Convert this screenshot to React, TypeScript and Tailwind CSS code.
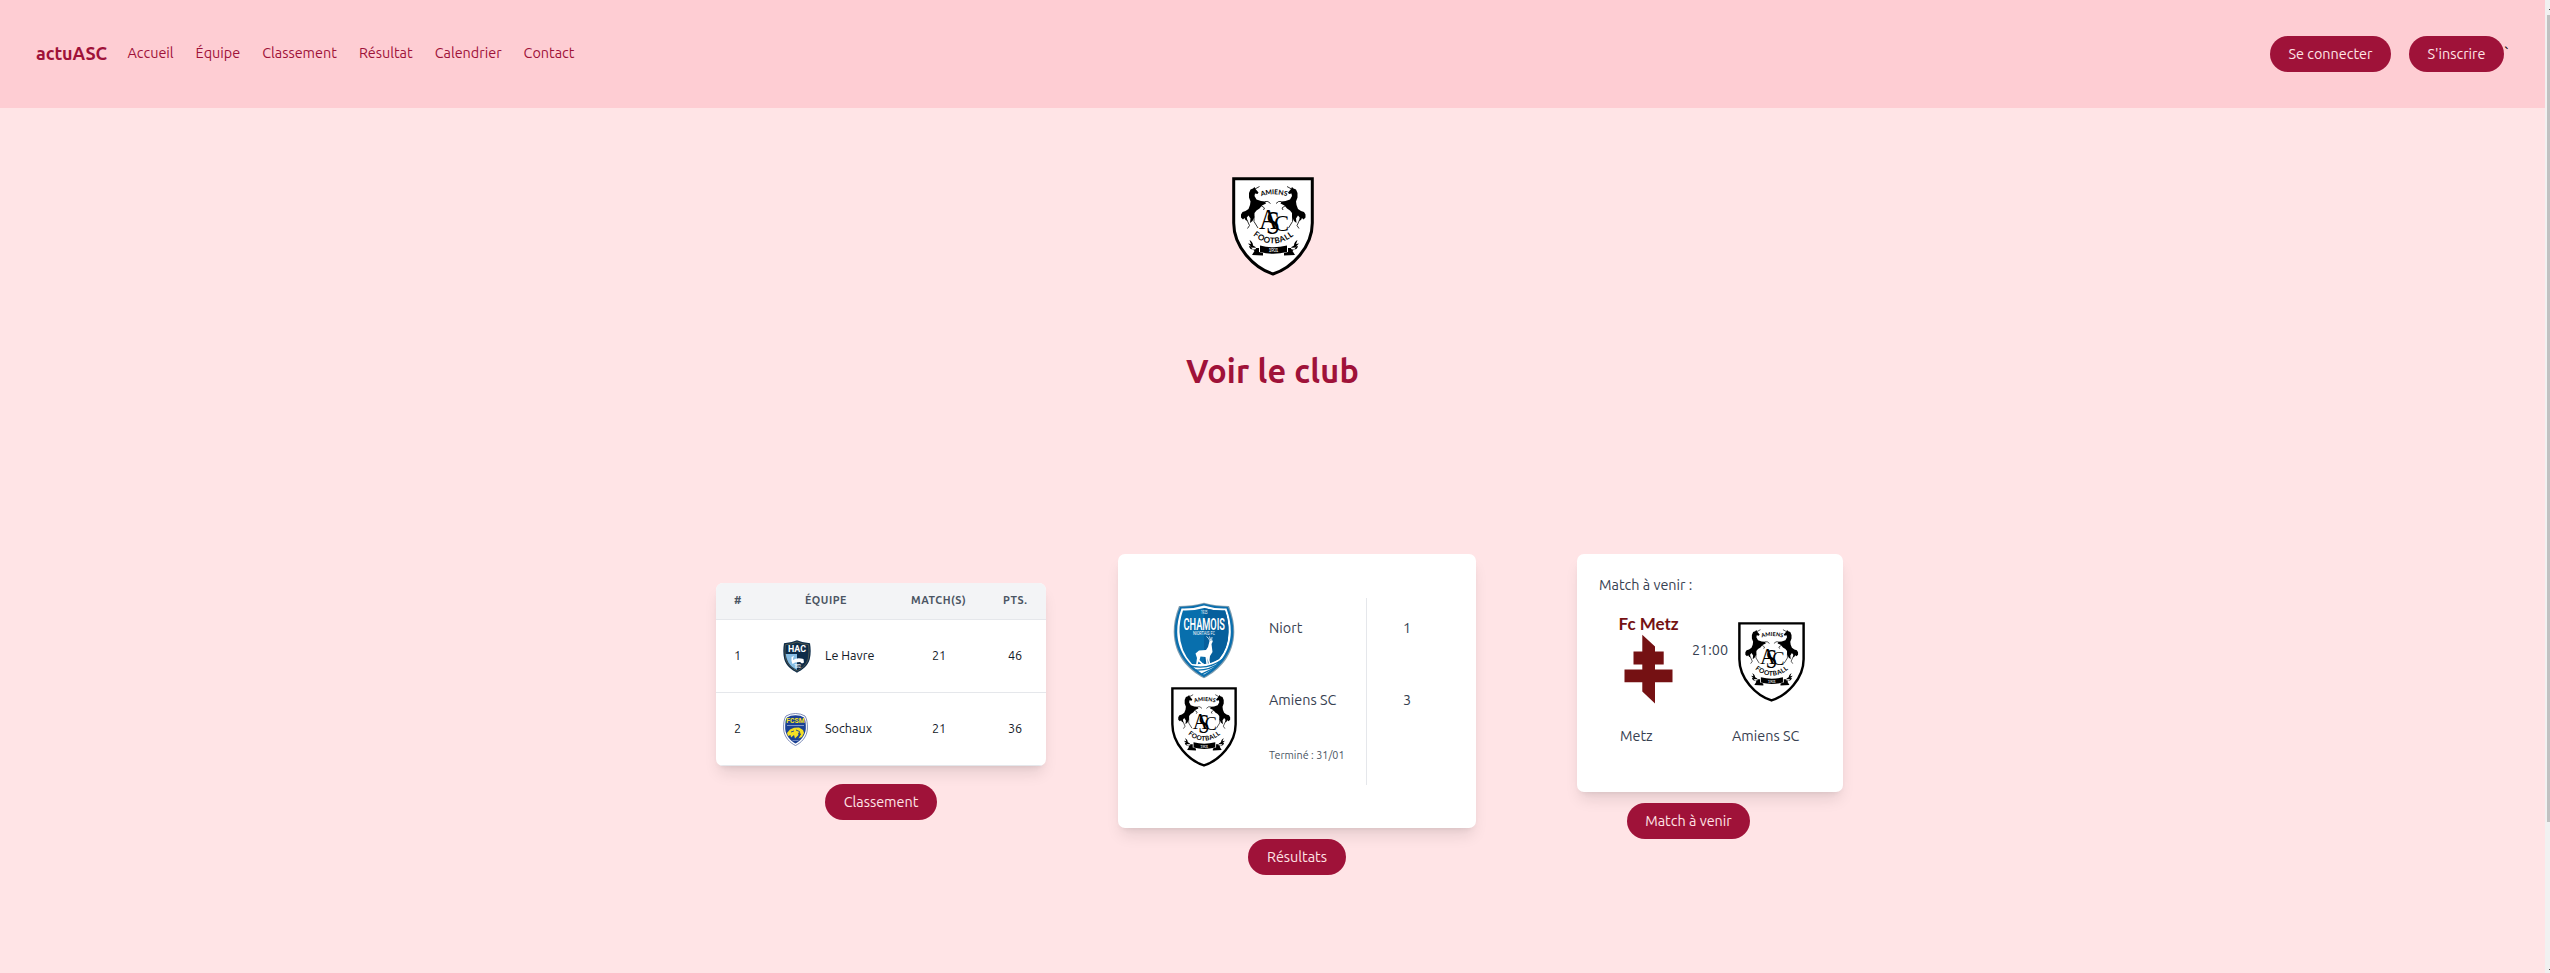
import type { ReactNode } from "react";

const navLinks = ["Accueil", "Équipe", "Classement", "Résultat", "Calendrier", "Contact"];

function Horse() {
  return (
    <g>
      <path d="M21 11.500 L22.500 10 L23.500 12 L26.500 15.500 L25.500 17 L23 16.500 L22.500 19 L24.500 22.500 L29 24 L33 24.500 L34 26.500 L30 28.500 L27.500 31.500 L24.500 33.500 L22.500 36 L22.500 40 L20.500 44 L18 46 L18.500 41.500 L16.500 38.500 L14.800 40.500 L15.500 44 L13.500 43 L12.500 41 L11 42.500 L9 40.500 L9 37.500 L10.500 35 L13.500 34 L16.500 32 L18 28 L18.500 24.500 L17 20.500 L17 16 L18.500 12.500Z" />
      <path d="M33 24.500 Q36 23.500 38.500 26.500 M29 28.500 L32.500 31 L31.500 33 M22 39.500 L22 44.500 L26 51 M15 43 L17.500 48.500 L15.500 51.500 M23 12 L27.500 9.500" fill="none" stroke="black" strokeWidth="0.8" />
    </g>
  );
}

function AmiensCrest({ id, className }: { id: string; className: string }) {
  return (
    <svg viewBox="0 0 82 99" className={className} preserveAspectRatio="none">
      <path d="M1.700 1.700 H80.300 V46 C80.300 70 60 91 41 97 C22 91 1.700 70 1.700 46Z" fill="white" stroke="black" strokeWidth="3" />
      <defs>
        <path id={`${id}-top`} d="M27 20 Q41.500 14.500 57 20" />
        <path id={`${id}-bottom`} d="M20 57.500 Q41 75.500 63 57.500" />
      </defs>
      <Horse />
      <g transform="translate(82.500 0) scale(-1 1)"><Horse /></g>
      <text className="font-['Lato']" fontSize="6.800" fontWeight="700"><textPath href={`#${id}-top`} startOffset="50%" textAnchor="middle">AMIENS</textPath></text>
      <g className="font-['Liberation_Serif']">
        <text x="27" y="51.500" fontSize="29" textLength="19" lengthAdjust="spacingAndGlyphs">A</text>
        <text x="34" y="57" fontSize="33" textLength="14" lengthAdjust="spacingAndGlyphs">S</text>
        <text x="42" y="53.500" fontSize="24" textLength="15" lengthAdjust="spacingAndGlyphs">C</text>
      </g>
      <text className="font-['Lato']" fontSize="8" fontWeight="700" letterSpacing=".5"><textPath href={`#${id}-bottom`} startOffset="50%" textAnchor="middle">FOOTBALL</textPath></text>
      <path d="M28 68.500 Q41 72 55 68.500 V75 Q41 78.500 28 75Z M27 71 L19 70.500 L22.500 74 L20 78 L31 78.500 L31 76 L27 75Z M56 71 L64 70.500 L60.500 74 L63 78 L52 78.500 L52 76 L56 75Z M24 72 Q18 74 17 69 L19 69.500 L16 66.500 L19 67 L17.500 63 Q21 65 21 68.500 L23.500 70Z M59 72 Q65 74 66 69 L64 69.500 L67 66.500 L64 67 L65.500 63 Q62 65 62 68.500 L59.500 70Z" />
      <text x="36.500" y="75.300" fontSize="5" fill="white" className="font-['Lato']" textLength="10">1901</text>
    </svg>
  );
}

function NiortCrest() {
  return (
    <svg viewBox="0 0 62 77" className="h-[77px] w-[62px]">
      <path d="M6 4 Q19 4 31 .7 Q43 4 56 4 Q61.500 18 61.300 30 C61 53 47 68 31 76.300 C15 68 1 53 .7 30 Q.5 18 6 4Z" fill="#7f9cae" />
      <path d="M7 5 Q19 5 31 1.700 Q43 5 55 5 Q60.500 18 60.300 30 C60 52 46 67 31 75.200 C16 67 2 52 1.700 30 Q1.500 18 7 5Z" fill="#0b6fae" />
      <path d="M8.500 6.500 Q20 7 31 3.500 Q42 7 53.500 6.500 Q58 19 57.800 30 C57.500 50 45 65 31 72.500 C17 65 4.500 50 4.200 30 Q4 19 8.500 6.500Z" fill="white" />
      <path d="M10 8.500 Q20 9 31 6 Q42 9 52 8.500 Q55.800 19 55.500 30 Q55.300 46 46 57 Q34 63 19 62 Q7 49 6.500 30 Q6.300 19 10 8.500Z" fill="#086fad" />
      <path d="M31 6 Q42 9 52 8.500 Q55.800 19 55.500 30 Q55.300 46 46 57 Q38 62 31 62Z" fill="#065f9c" />
      <g fill="white" className="font-['Roboto']">
        <text x="28" y="12" fontSize="5" textLength="6.500" lengthAdjust="spacingAndGlyphs">1925</text>
        <text x="10.500" y="27.500" fontSize="16.500" fontWeight="600" textLength="41.500" lengthAdjust="spacingAndGlyphs">CHAMOIS</text>
        <text x="20" y="33" fontSize="6" textLength="22" lengthAdjust="spacingAndGlyphs">NIORTAIS FC</text>
      </g>
      <path d="M36.500 39 L40 38.500 L39.300 40.500 L38.500 42 L39.500 50 L37 54 L36.500 58 L37.500 63 H36 L34.500 56 L35 63 H33.500 L32.500 55 L27.500 54.500 L26.500 58 L31.500 63 H29.500 L25.500 59.500 L24.500 63 H23 L24 56 L22.500 51.500 L26 48.500 L33 48 L35 45Z" fill="white" />
      <path d="M37 39 Q36 36 33.500 34.500 M38 39 L36.500 34.500 M38.500 38.700 L39 35" fill="none" stroke="white" strokeWidth=".8" />
      <path d="M18 64 Q36 68 50 57 M23 68 Q37 68.500 47 60.500 M29 71.800 Q38 68 43 64.500" fill="none" stroke="#086fad" strokeWidth="1.300" />
    </svg>
  );
}

function HavreCrest() {
  return (
    <svg viewBox="0 0 28 33" className="h-[33px] w-[28px]">
      <path d="M14 .3 Q20 3 27 3.200 Q28.500 12 26.800 19 C25 26 19 30 14 32.700 C9 30 3 26 1.200 19 Q-.5 12 1 3.200 Q8 3 14 .3Z" fill="#0d2c49" />
      <path d="M14 2 Q20 4.500 25.600 4.700 Q26.600 12 25.300 18.500 C23.500 25 18.500 28.500 14 31" fill="none" stroke="#8b7f55" strokeWidth=".5" />
      <path d="M14 2 Q8 4.500 2.400 4.700 Q1.400 12 2.700 18.500 C4.500 25 9.500 28.500 14 31" fill="none" stroke="#8b7f55" strokeWidth=".5" />
      <path d="M2.700 14 H14 V30 C9 27.500 4 24 2.700 14Z" fill="#86bde3" />
      <text x="5" y="12.300" fontSize="9" fontWeight="700" fill="white" className="font-['Roboto']" textLength="18" lengthAdjust="spacingAndGlyphs">HAC</text>
      <path d="M8.500 17 L11 16 L10 18.500 L10 20 Q14 17 20.500 19 L21 22.500 L19 23.500 L17 22 L12 22.500 L9.500 24 L8.500 21Z" fill="white" />
      <text x="11" y="28" fontSize="4.500" fill="white" className="font-['Roboto']" textLength="7">1872</text>
    </svg>
  );
}

function SochauxCrest() {
  return (
    <svg viewBox="0 0 25 33" className="h-[33px] w-[25px]">
      <path d="M12.500 .5 Q18 .6 22 3 Q24.700 7 24.400 16 C24 24 18 30 12.500 32.500 C7 30 1 24 .6 16 Q.3 7 3 3 Q7 .6 12.500 .5Z" fill="white" stroke="#5b6da3" strokeWidth=".8" />
      <path d="M12.500 2.300 Q18 2.300 21 4.500 Q23.200 8 22.800 16 C22.300 23 17 28 12.500 30.500 C8 28 2.700 23 2.200 16 Q1.800 8 4 4.500 Q7 2.300 12.500 2.300Z" fill="#1b4194" />
      <text x="3.300" y="10" fontSize="7.300" fontWeight="700" fill="#f9e51e" className="font-['Roboto']" textLength="18.400" lengthAdjust="spacingAndGlyphs">FCSM</text>
      <path d="M4 12.500 H21" stroke="#8fa2ce" strokeWidth=".9" />
      <path d="M4 20 L7 16.500 L11 14.700 L16 14.500 L20 17 L21 20 L19 24 L15.500 25.500 L18 21 L15 19.500 L15.500 22 L12 25.500 L11 22 L8 24.500 L7.500 22 L5 23Z" fill="#f4df25" />
      <path d="M8 19 L11 18 M13 17 L16.500 18.500 L17 22" stroke="#1b4194" strokeWidth=".9" fill="none" />
      <path d="M9.500 27.500 H15.500" stroke="#8fa2ce" strokeWidth=".7" />
    </svg>
  );
}

function MetzCrest() {
  return (
    <svg viewBox="0 0 62 88" className="h-[88px] w-[62px]">
      <text x=".6" y="13.300" fontSize="17" fontWeight="700" fill="#751113" className="font-['Lato']" textLength="60" lengthAdjust="spacingAndGlyphs">Fc Metz</text>
      <path d="M24.300 17.700 L37 29.500 V34.500 H45.700 V47.500 H37 V52.500 H54.500 V65.300 H37 V86.500 L24.300 74.500 V65.300 H6.500 V52.500 H24.300 V47.500 H15.500 V34.500 H24.300Z" fill="#751113" />
    </svg>
  );
}

function Pill({ children, className }: { children: ReactNode; className: string }) {
  return (
    <button className={`h-9 shrink-0 rounded-full bg-[#9f1239] text-center leading-[35px] whitespace-nowrap text-[#ffe4e6] ${className}`}>
      {children}
    </button>
  );
}

function TableRow({ rank, crest, team, points }: { rank: number; crest: ReactNode; team: string; points: number }) {
  return (
    <div className="flex h-[73px] items-center border-b border-[#e5e7eb] text-[12.6px] text-[#111827]">
      <span className="w-[66px] pl-[18px]">{rank}</span>
      <span className="flex w-[43px] pl-px">{crest}</span>
      <span className="w-[107px]">{team}</span>
      <span className="w-[76px]">21</span>
      <span>{points}</span>
    </div>
  );
}

export default function App() {
  return (
    <div className="flex h-[973px] w-[2550px] overflow-hidden bg-[#ffe4e6] font-['Ubuntu','Noto_Sans',sans-serif] text-[14.4px] leading-[21.6px]">
      <div className="flex w-[2545px] flex-col">
        <header className="flex h-[108px] shrink-0 items-center bg-[#fecdd3] pl-9 text-[#9f1239]">
          <span className="w-[91.5px] text-[18px] font-bold tracking-[-0.1px]">actuASC</span>
          <nav className="flex flex-1 gap-[22px]">
            {navLinks.map((l) => (
              <a key={l}>{l}</a>
            ))}
          </nav>
          <Pill className="mr-[18px] w-[121px]">Se connecter</Pill>
          <Pill className="w-[95px]">S'inscrire</Pill>
          <span className="w-[41px] text-black">`</span>
        </header>

        <main className="flex flex-col">
          <section className="flex h-[446px] flex-col items-center pt-[69px]">
            <AmiensCrest id="club" className="h-[99px] w-[82px]" />
            <h1 className="mt-[75px] text-[32.4px] leading-[40px] font-bold tracking-[0.2px] text-[#9f1239]">Voir le club</h1>
          </section>

          <section className="flex items-start pl-[716px] text-[#374151]">
            <div className="mt-[29px] flex w-[330px] flex-col items-center">
              <div className="w-full overflow-hidden rounded-[7px] bg-white shadow-lg">
                <div className="flex h-[37px] items-center border-b border-[#e5e7eb] bg-[#f3f4f6] text-[10.8px] font-bold tracking-[0.54px] text-[#4b5563]">
                  <span className="w-[89px] pl-[18px]">#</span>
                  <span className="w-[106px]">ÉQUIPE</span>
                  <span className="w-[92px]">MATCH(S)</span>
                  <span>PTS.</span>
                </div>
                <TableRow rank={1} crest={<HavreCrest />} team="Le Havre" points={46} />
                <TableRow rank={2} crest={<SochauxCrest />} team="Sochaux" points={36} />
              </div>
              <Pill className="mt-[18px] w-[112px]">Classement</Pill>
            </div>

            <div className="ml-[72px] flex w-[358px] flex-col items-center">
              <div className="flex h-[274px] w-full rounded-[7px] bg-white pt-11 shadow-lg">
                <div className="ml-[37px] flex w-[98px] flex-col items-center pt-1">
                  <NiortCrest />
                  <AmiensCrest id="result" className="mt-2 h-[80px] w-[66px]" />
                </div>
                <div className="flex h-[187px] w-[98px] flex-col pt-5 pl-[16px]">
                  <span>Niort</span>
                  <span className="mt-[50.4px]">Amiens SC</span>
                  <span className="mt-[33.500px] text-[10.8px] whitespace-nowrap text-[#4b5563]">Terminé : 31/01</span>
                </div>
                <div className="ml-[15px] flex h-[187px] flex-col border-l border-[#e5e7eb] pt-5 pl-[36px]">
                  <span>1</span>
                  <span className="mt-[50.4px]">3</span>
                </div>
              </div>
              <Pill className="mt-[11px] w-[98px]">Résultats</Pill>
            </div>

            <div className="ml-[101px] w-[266px]">
              <div className="h-[238px] rounded-[7px] bg-white pt-[21px] pl-[22px] shadow-lg">
                <p>Match à venir :</p>
                <div className="flex items-start pt-5 pl-[19px]">
                  <MetzCrest />
                  <span className="ml-[12px] w-[46px] pt-[23px]">21:00</span>
                  <AmiensCrest id="next" className="mt-[5px] h-[80px] w-[67px]" />
                </div>
                <div className="flex pt-[21px] pl-[21px]">
                  <span className="w-[112px]">Metz</span>
                  <span>Amiens SC</span>
                </div>
              </div>
              <Pill className="mt-[11px] ml-[50px] w-[123px]">Match à venir</Pill>
            </div>
          </section>
        </main>
      </div>

      <aside className="flex w-[5px] flex-col bg-[#f1f1f1] pt-[9px] pl-0.5">
        <div className="ml-0.5 h-px w-px bg-[#505050]" />
        <div className="mt-[5px] h-[807px] bg-[#c1c1c1]" />
        <div className="mt-[147px] ml-0.5 h-px w-px bg-[#505050]" />
      </aside>
    </div>
  );
}
